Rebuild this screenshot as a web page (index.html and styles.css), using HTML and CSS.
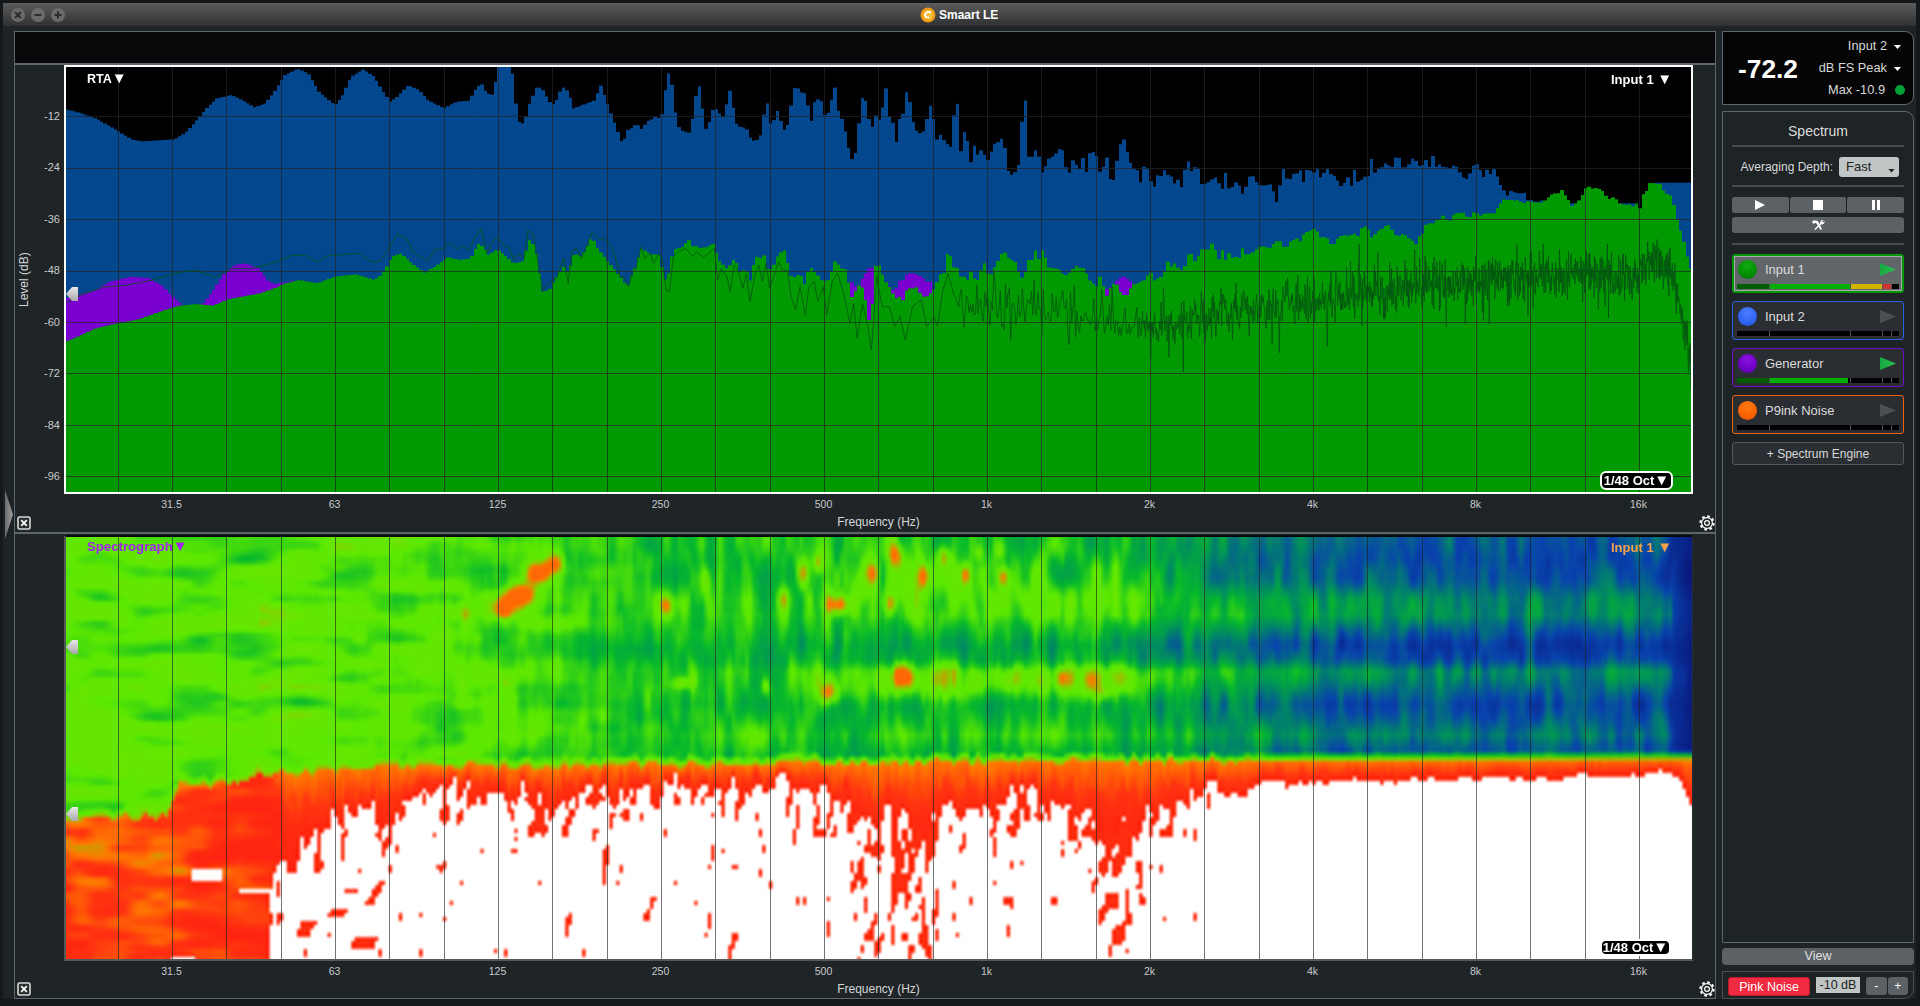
FILE: index.html
```html
<!DOCTYPE html>
<html lang="en">
<head>
<meta charset="utf-8">
<title>Smaart LE</title>
<link rel="stylesheet" href="styles.css">
</head>
<body>
<div class="app">
  <header class="titlebar">
    <div class="winbtns">
      <svg class="winbtn" viewBox="0 0 14 14"><circle cx="7" cy="7" r="7" fill="#6b6b6b"/><path d="M4 4l6 6M10 4l-6 6" stroke="#2c2c2c" stroke-width="2"/></svg>
      <svg class="winbtn" viewBox="0 0 14 14"><circle cx="7" cy="7" r="7" fill="#6b6b6b"/><path d="M3.5 7h7" stroke="#2c2c2c" stroke-width="2"/></svg>
      <svg class="winbtn" viewBox="0 0 14 14"><circle cx="7" cy="7" r="7" fill="#6b6b6b"/><path d="M3.5 7h7M7 3.5v7" stroke="#2c2c2c" stroke-width="2"/></svg>
    </div>
    <div class="apptitle">
      <svg class="applogo" viewBox="0 0 16 16"><circle cx="8" cy="8" r="7.5" fill="#f09a14"/><circle cx="8" cy="8" r="5" fill="#f8c040"/><path d="M11 5.500A4 4 0 0 0 5 8c.4 2 2.400 3 4 2.200" fill="none" stroke="#fff" stroke-width="1.600"/></svg>
      <span>Smaart LE</span>
    </div>
  </header>
  <div class="workspace">
    <main class="main">
      <div class="cmdbar"></div>
      <section class="pane pane-rta">
        <div class="yaxis">
          <div class="ylabel">Level (dB)</div>
          <div class="yticks">
            <span>-12</span><span>-24</span><span>-36</span><span>-48</span><span>-60</span><span>-72</span><span>-84</span><span>-96</span>
          </div>
        </div>
        <div class="plot plot-rta">
          <canvas id="rta" width="1625" height="425"></canvas>
          <div class="tag tag-left tag-rta">RTA<b class="tri">▼</b></div>
          <div class="tag tag-right">Input 1 <b class="tri">▼</b></div>
          <div class="badge">1/48 Oct<b class="tri">▼</b></div>
          <i class="handle handle-a"></i>
        </div>
        <svg class="closebox" viewBox="0 0 14 14"><rect x="1" y="1" width="12" height="12" rx="1.5" fill="#2a2e31" stroke="#d8d8d8" stroke-width="1.6"/><path d="M4.2 4.2l5.6 5.6M9.8 4.2l-5.6 5.6" stroke="#fff" stroke-width="1.7"/></svg>
        <div class="xaxis">
          <div class="xticks"><span>31.5</span><span>63</span><span>125</span><span>250</span><span>500</span><span>1k</span><span>2k</span><span>4k</span><span>8k</span><span>16k</span></div>
          <div class="xlabel">Frequency (Hz)</div>
        </div>
        <svg class="gear" viewBox="0 0 16 16"><circle cx="8" cy="8" r="5.4" fill="none" stroke="#fff" stroke-width="1.2"/><circle cx="8" cy="8" r="6.6" fill="none" stroke="#fff" stroke-width="2.2" stroke-dasharray="2.6 2.58"/><circle cx="8" cy="8" r="2.4" fill="none" stroke="#fff" stroke-width="1.2"/></svg>
      </section>
      <section class="pane pane-spec">
        <div class="specgutter"></div>
        <div class="plot plot-spec">
          <canvas id="spec" width="1626" height="422"></canvas>
          <div class="tag tag-left tag-spec">Spectrograph<b class="tri">▼</b></div>
          <div class="tag tag-right tag-orange">Input 1 <b class="tri">▼</b></div>
          <div class="badge badge-spec">1/48 Oct<b class="tri">▼</b></div>
          <i class="handle handle-b"></i>
          <i class="handle handle-c"></i>
        </div>
        <svg class="closebox" viewBox="0 0 14 14"><rect x="1" y="1" width="12" height="12" rx="1.5" fill="#2a2e31" stroke="#d8d8d8" stroke-width="1.6"/><path d="M4.2 4.2l5.6 5.6M9.8 4.2l-5.6 5.6" stroke="#fff" stroke-width="1.7"/></svg>
        <div class="xaxis">
          <div class="xticks"><span>31.5</span><span>63</span><span>125</span><span>250</span><span>500</span><span>1k</span><span>2k</span><span>4k</span><span>8k</span><span>16k</span></div>
          <div class="xlabel">Frequency (Hz)</div>
        </div>
        <svg class="gear" viewBox="0 0 16 16"><circle cx="8" cy="8" r="5.4" fill="none" stroke="#fff" stroke-width="1.2"/><circle cx="8" cy="8" r="6.6" fill="none" stroke="#fff" stroke-width="2.2" stroke-dasharray="2.6 2.58"/><circle cx="8" cy="8" r="2.4" fill="none" stroke="#fff" stroke-width="1.2"/></svg>
      </section>
      <i class="splitter"></i>
    </main>
    <aside class="side">
      <div class="meterbox">
        <div class="bigval">-72.2</div>
        <div class="meterinfo">
          <div class="minfo">Input 2<b class="caret"></b></div>
          <div class="minfo">dB FS Peak<b class="caret"></b></div>
          <div class="minfo">Max -10.9<b class="okdot"></b></div>
        </div>
      </div>
      <div class="spectrum">
        <div class="ptitle">Spectrum</div>
        <div class="sep"></div>
        <div class="avgrow">
          <span>Averaging Depth:</span>
          <div class="select">Fast<b class="caret caret-dark"></b></div>
        </div>
        <div class="sep"></div>
        <div class="transport">
          <button class="tbtn"><svg viewBox="0 0 12 10" width="12" height="10"><path d="M1 0l10 5-10 5z" fill="#fff"/></svg></button>
          <button class="tbtn"><svg viewBox="0 0 10 10" width="10" height="10"><rect width="10" height="10" fill="#fff"/></svg></button>
          <button class="tbtn"><svg viewBox="0 0 10 10" width="10" height="10"><path d="M1 0h3v10H1zM6 0h3v10H6z" fill="#fff"/></svg></button>
        </div>
        <button class="toolsbtn"><svg viewBox="0 0 14 12" width="14" height="12"><path d="M2 1.500l4 0 1.500 1.500 3.500 7-1.500 1-4-6.500-1.500-.8L2.800 5 1 3.200z" fill="#fff"/><path d="M12.500 1.200a2.500 2.500 0 0 0-3.300 3L3.400 10l1 1 5.800-5.700a2.500 2.500 0 0 0 3.200-3.200L12 3.500 11 2.500z" fill="#fff"/></svg></button>
        <div class="sep sep-tools"></div>
        <div class="engines">
          <div class="engine engine-green selected">
            <div class="erow"><i class="led led-green"></i><span class="ename">Input 1</span><i class="play on"></i></div>
            <div class="ebar"><u class="c1"><i class="f-dark" style="width:100%"></i></u><u class="c2"><i class="f-green" style="width:100%"></i></u><u class="c3"><i class="f-yellow" style="width:100%"></i></u><u class="c4"><i class="f-red" style="width:100%"></i></u><u class="c5"></u></div>
          </div>
          <div class="engine engine-blue">
            <div class="erow"><i class="led led-blue"></i><span class="ename">Input 2</span><i class="play"></i></div>
            <div class="ebar"><u class="c1"></u><u class="c2"></u><u class="c3"></u><u class="c4"></u><u class="c5"></u></div>
          </div>
          <div class="engine engine-purple">
            <div class="erow"><i class="led led-purple"></i><span class="ename">Generator</span><i class="play on"></i></div>
            <div class="ebar"><u class="c1"><i class="f-dark" style="width:100%"></i></u><u class="c2"><i class="f-green" style="width:98%"></i></u><u class="c3"></u><u class="c4"></u><u class="c5"></u></div>
          </div>
          <div class="engine engine-orange">
            <div class="erow"><i class="led led-orange"></i><span class="ename">P9ink Noise</span><i class="play"></i></div>
            <div class="ebar"><u class="c1"></u><u class="c2"></u><u class="c3"></u><u class="c4"></u><u class="c5"></u></div>
          </div>
        </div>
        <button class="addengine">+ Spectrum Engine</button>
      </div>
      <button class="viewbtn">View</button>
      <div class="genbar">
        <button class="pinkbtn">Pink Noise</button>
        <div class="dbfield">-10 dB</div>
        <div class="stepper"><button>-</button><button>+</button></div>
      </div>
    </aside>
  </div>
</div>
<script src="charts.js"></script>
</body>
</html>
```
FILE: styles.css
```css
* { box-sizing: border-box; }
html, body { margin: 0; height: 100%; }
body { background: #14181a; font-family: "Liberation Sans", Arial, sans-serif; color: #d8d8d8; overflow: hidden; }
button { font: inherit; color: inherit; border: 0; padding: 0; margin: 0; }
.app { width: 1920px; height: 1006px; padding: 3px 4px 7px 3px; display: flex; flex-direction: column; }
.titlebar { height: 23px; flex: none; background: linear-gradient(#5c5c5c, #2f3032); display: flex; align-items: center; position: relative; }
.winbtns { display: flex; gap: 6px; padding-left: 8px; }
.winbtn { width: 14px; height: 14px; display: block; }
.apptitle { position: absolute; left: 917px; top: 0; height: 23px; display: flex; align-items: center; gap: 3px; font-size: 12px; font-weight: bold; color: #fff; }
.applogo { width: 16px; height: 16px; }
.workspace { flex: 1; display: flex; gap: 6px; padding: 5px 2px 0 11px; min-height: 0; background: #1e2326; }
.main { width: 1702px; height: 968px; border: 1px solid #5b6670; flex: none; display: flex; flex-direction: column; position: relative; background: #1f2427; }
.cmdbar { height: 33px; flex: none; background: #080808; border-bottom: 2px solid #5b6670; }
.pane { display: grid; grid-template-columns: 49px 1629px 22px; flex: none; }
.pane-rta { height: 467px; grid-template-rows: 429px 38px; }
.pane-spec { height: 466px; padding-top: 1px; border-top: 2px solid #5b6670; grid-template-rows: 426px 37px; }
.yaxis { display: flex; grid-column: 1; grid-row: 1; }
.specgutter { grid-column: 1; grid-row: 1; }
.ylabel { writing-mode: vertical-rl; transform: rotate(180deg); font-size: 12px; text-align: center; width: 18px; margin-left: 2px; color: #d4d6d8; }
.yticks { flex: 1; display: flex; flex-direction: column; padding-top: 25.3px; align-items: flex-end; padding-right: 4px; font-size: 11px; color: #c8cacc; }
.yticks span { flex: none; height: 51.43px; display: flex; align-items: center; }
.plot { position: relative; grid-column: 2; grid-row: 1; }
.plot canvas { display: block; }
.plot-rta { border: 2px solid #fff; background: #000; }
.plot-spec { border-left: 2px solid #555a58; border-bottom: 2px solid #555a58; border-top: 2px solid #0a0a0a; border-right: 1px solid #2a2e31; }
.tag { position: absolute; font-size: 13px; font-weight: bold; color: #fff; line-height: 14px; white-space: nowrap; }
.tag .tri { font-weight: normal; }
.tri { font-size: 15px; line-height: 12px; }
.tag-left { left: 21px; top: 5px; }
.tag-rta { font-size: 12.500px; }
.tag-spec { color: #a224f0; font-size: 13.200px; top: 3px; }
.tag-right { left: 1545px; top: 6px; }
.tag-orange { color: #f5a04a; top: 4px; }
.badge { position: absolute; left: 1534px; top: 404px; width: 73px; height: 19px; border: 2px solid #fff; border-radius: 6px; background: #000; color: #fff; font-size: 13px; font-weight: bold; line-height: 15px; text-align: center; white-space: nowrap; }
.badge .tri { font-weight: normal; }
.badge-spec { left: 1534px; top: 402px; width: 71px; height: 17px; line-height: 13px; }
.handle { position: absolute; left: 0; width: 12px; height: 14px; background: linear-gradient(#e8e8e8, #a8a8a8); clip-path: polygon(0 50%, 50% 0, 100% 0, 100% 100%, 50% 100%); display: block; }
.handle-a { top: 220px; }
.handle-b { top: 103px; }
.handle-c { top: 270px; }
.closebox { grid-column: 1; grid-row: 2; width: 14px; height: 14px; align-self: end; margin: 0 0 2px 2px; display: block; }
.xaxis { grid-column: 2; grid-row: 2; display: flex; flex-direction: column; }
.xticks { display: flex; padding-left: 26px; height: 20px; align-items: center; font-size: 10.500px; color: #c8cacc; }
.xticks span { flex: none; width: 163px; text-align: center; }
.xlabel { text-align: center; font-size: 12px; line-height: 16px; color: #d4d6d8; }
.gear { grid-column: 3; grid-row: 2; width: 16px; height: 16px; align-self: end; margin: 0 0 1px 6px; display: block; }
.splitter { position: absolute; left: -10px; top: 458px; width: 8px; height: 49px; background: linear-gradient(90deg, #6a6a6a, #a0a0a0); clip-path: polygon(0 0, 100% 50%, 0 100%); }
.side { width: 192px; flex: none; height: 968px; display: flex; flex-direction: column; }
.meterbox { height: 74px; flex: none; background: #050505; border: 1px solid #5b6670; border-radius: 0 9px 9px 0; display: flex; align-items: center; padding: 0 12px 0 15px; justify-content: space-between; }
.bigval { font-size: 26.300px; font-weight: bold; color: #fff; padding-top: 2px; }
.meterinfo { display: flex; flex-direction: column; align-items: flex-end; gap: 8px; font-size: 12.800px; color: #d8d8d8; line-height: 14px; margin-top: -1px; }
.minfo { display: flex; align-items: center; }
.caret { display: block; width: 7px; height: 4px; background: #fff; clip-path: polygon(0 0, 100% 0, 50% 100%); margin: 3px 0 0 7px; }
.caret-dark { background: #222; margin: 4px 0 0 0; position: absolute; right: 4px; top: 8px; }
.okdot { display: block; width: 10px; height: 10px; border-radius: 50%; background: #00a038; margin: 0 -4px 0 10px; }
.spectrum { margin-top: 6px; flex: 1; border: 1px solid #5b6670; border-radius: 0 9px 0 0; padding: 0 9px; display: flex; flex-direction: column; min-height: 0; }
.ptitle { height: 33px; padding-top: 4px; text-align: center; font-size: 14px; line-height: 30px; flex: none; color: #dcdcdc; }
.sep { height: 2px; background: #464c50; flex: none; }
.avgrow { height: 38px; display: flex; align-items: center; justify-content: flex-end; gap: 6px; padding: 1px 5px 0 0; font-size: 12px; flex: none; }
.select { position: relative; width: 60px; height: 20px; background: #c0c6c6; border-radius: 3px; color: #222; font-size: 13px; line-height: 20px; padding-left: 7px; }
.transport { display: flex; gap: 1px; margin-top: 10px; height: 16px; flex: none; }
.tbtn { flex: 1; background: #5c6166; border-radius: 2px; display: flex; align-items: center; justify-content: center; }
.toolsbtn { margin-top: 4px; height: 16px; flex: none; background: #5c6166; border-radius: 3px; display: flex; align-items: center; justify-content: center; }
.sep-tools { margin-top: 10px; }
.engines { margin-top: 9px; display: flex; flex-direction: column; gap: 8px; flex: none; }
.engine { height: 39px; border: 1px solid; border-radius: 3px; background: #2a2e33; padding: 0 4px; }
.engine-green { border-color: #009a00; background: #62666a; box-shadow: inset 0 0 0 1px #009a00, inset 0 0 0 2px #a8aaac; }
.engine-blue { border-color: #2b5fe0; }
.engine-purple { border-color: #6a10c8; }
.engine-orange { border-color: #ee6010; }
.erow { height: 29px; display: flex; align-items: center; }
.led { display: block; width: 19px; height: 19px; border-radius: 50%; margin-left: 1px; }
.led-green { background: radial-gradient(circle at 50% 30%, #10ae10, #008a00 65%, #006a00); }
.led-blue { background: radial-gradient(circle at 50% 30%, #4a80ff, #2e62f0 65%, #2450c0); }
.led-purple { background: radial-gradient(circle at 50% 30%, #8a10e0, #6c00c4 65%, #5400a0); }
.led-orange { background: radial-gradient(circle at 50% 30%, #ff7a10, #fa6000 65%, #d04e00); }
.ename { font-size: 13px; margin-left: 8px; flex: 1; color: #dcdcdc; padding-bottom: 1px; }
.play { display: block; width: 16px; height: 13px; background: #4c5054; clip-path: polygon(0 0, 100% 50%, 0 100%); margin-right: 3px; }
.play.on { background: linear-gradient(90deg, #18a840, #28c050); }
.ebar { height: 5px; display: flex; gap: 1px; background: #555; }
.ebar u { display: block; height: 100%; background: #000; text-decoration: none; }
.ebar .c1 { width: 32px; }
.ebar .c2 { width: 80px; }
.ebar .c3 { width: 31px; }
.ebar .c4 { width: 8px; }
.ebar .c5 { width: 7px; }
.ebar u i { display: block; height: 100%; }
.f-dark { background: #005c00; }
.f-green { background: #00ae00; }
.f-yellow { background: #d0b400; }
.f-red { background: #d03434; }
.addengine { margin-top: 8px; height: 23px; flex: none; background: #2a2e33; border: 1px solid #54585c; border-radius: 3px; font-size: 12px; color: #d8d8d8; padding-top: 1px; }
.viewbtn { margin-top: 5px; height: 17px; flex: none; background: #5c6166; border-radius: 4px; font-size: 12.500px; color: #e0e0e0; line-height: 17px; }
.genbar { margin-top: 6px; height: 28px; flex: none; border: 1px solid #464c50; border-radius: 0 0 10px 0; display: flex; align-items: flex-start; padding: 5px 5px 0; }
.pinkbtn { width: 82px; height: 19px; background: #f02a40; border: 1px solid #b81a2c; border-radius: 3px; color: #fff; font-size: 12.500px; }
.dbfield { width: 44px; height: 16px; margin-left: 6px; background: #c0c6c6; color: #222; font-size: 12.500px; line-height: 16px; text-align: center; }
.stepper { margin-left: 6px; width: 42px; height: 18px; display: flex; gap: 1px; }
.stepper button { flex: 1; background: #5c6166; color: #fff; font-size: 12px; border-radius: 3px; }
```
FILE: charts.js
```js
(function () {
  // ---------- helpers ----------
  function rng(seed) {
    return function () {
      seed |= 0; seed = seed + 0x6D2B79F5 | 0;
      var t = Math.imul(seed ^ seed >>> 15, 1 | seed);
      t = t + Math.imul(t ^ t >>> 7, 61 | t) ^ t;
      return ((t ^ t >>> 14) >>> 0) / 4294967296;
    };
  }
  function lerpTable(tbl, x) {
    if (x <= tbl[0][0]) return tbl[0][1];
    for (var i = 1; i < tbl.length; i++) {
      if (x <= tbl[i][0]) {
        var a = tbl[i - 1], b = tbl[i];
        return a[1] + (b[1] - a[1]) * (x - a[0]) / (b[0] - a[0]);
      }
    }
    return tbl[tbl.length - 1][1];
  }
  function hash(ix, iy, s) {
    var h = Math.sin(ix * 127.1 + iy * 311.7 + s * 74.7) * 43758.5453;
    return h - Math.floor(h);
  }
  function vnoise(x, y, sx, sy, s) {
    var fx = x / sx, fy = y / sy, ix = Math.floor(fx), iy = Math.floor(fy);
    var u = fx - ix, v = fy - iy;
    u = u * u * (3 - 2 * u); v = v * v * (3 - 2 * v);
    var a = hash(ix, iy, s), b = hash(ix + 1, iy, s), c = hash(ix, iy + 1, s), d = hash(ix + 1, iy + 1, s);
    return a + (b - a) * u + (c - a) * v + (a - b - c + d) * u * v;
  }
  function pts8(list) { return list.map(function (p) { return [60 + p[0] / 2.8, 60 + p[1] / 3]; }); }
  function stepped(orgX, vals, from) {
    var out = [];
    for (var i = 0; i < vals.length; i++) {
      var x = orgX + (i * 10) / 2.8;
      if (x >= from) out.push([x, 60 + vals[i] / 3]);
    }
    return out;
  }

  // ---------- RTA traces ----------
  var blue = pts8([[18,148],[60,160],[100,175],[150,205],[200,238],[230,244],[320,238],[350,220],[380,185],[410,145],[440,115],[480,105],[510,120],[545,142],[575,130],[600,95],[630,45],[665,26],[695,40],[725,95],[770,135],[790,110],[815,50],[850,28],[880,50],[905,95],[925,125],[945,110],[975,75],[1005,90],[1030,120],[1075,145],[1110,125],[1145,122],[1165,85],[1180,70],[1195,100],[1215,105],[1225,20],[1265,20],[1275,120],[1285,185],[1300,192],[1315,130],[1335,80],[1350,85],[1370,125],[1385,135],[1400,95],[1412,80],[1425,100],[1438,145],[1500,120],[1512,70]])
    .concat(stepped(600, [70,72,108,125,132,175,245,235,205,205,192,198,212,182,182,175,165,188,115,35,55,150,200,212,215,218,172,97,75,168,222,168,138,155,165,175,75,122,188,200,202,205,232,242,240,225,155,125,208,170,145,205,212,180,90,76,100,92,118,195,128,118,122,165,158,115,77,172,178,230,282,308,255,125,100,155,218,160,185,155,75,170,188,248,170,160,82,140,205,215,222,208,148,125,250,218,238,245,278,172,120,275,215,245,315,245,295,262,295,302,255,248,245,225,325,348,335,342,198,105,290,290,270,292,345,312,290,290,275,262,278,365,305,295,350,275,350,280,275,285,335,320,290,368,358,285,240,238,300,315,338,322], 618))
    .concat(stepped(1140, [380,320,320,362,380,345,348,328,348,350,378,350,400,278,328,340,298,372,372,368,360,350,368,388,338,388,380,365,380,408,368,340,355,375,375,378,372,375,438,390,322,355,358,342,340,330,372,320,335,338,320,372,312,340,345,352,378,378,342,388,325,365,360,350,348,290,348,320,322,305,322,320,268,322,322,322,295,298,318,318,298,322,288,322,312,322,322,325,312,325,345,358,355,322,310,318,360,325,345,325,348,375,392,408,390,398,400,400,398,435,408,440,408,440,430,430,430,430,430,430,430,430,430,430,430,430,430,430,430,430,430,430,430,430,430,430,430,430,430,430,458,430,400,395,368], 1140));

  var green = pts8([[18,845],[60,825],[100,805],[160,790],[220,778],[280,755],[330,738],[380,732],[430,737],[470,718],[510,710],[560,700],[600,685],[630,670],[670,660],[720,670],[770,650],[830,643],[880,660],[900,645],[915,620],[930,590],[955,580],[985,610],[1020,638],[1050,620],[1085,592],[1120,600],[1150,595],[1170,550],[1185,560],[1200,585],[1225,567],[1250,590],[1270,610],[1295,605],[1315,540],[1330,560],[1345,650],[1350,695],[1370,690],[1385,660],[1410,620],[1422,640],[1440,580],[1460,590],[1490,530],[1505,565]])
    .concat(stepped(600, [545,535,545,560,590,640,655,670,675,640,620,580,560,580,578,590,575,600,660,655,595,568,565,562,550,540,560,558,565,562,562,555,550,600,605,625,625,600,600,635,630,630,665,615,590,595,585,635,625,610,580,575,568,645,650,655,630,685,640,622,635,645,660,662,660,630,600,618,628,628,690,725,668,685,680,780,780,620,610,640,665,680,700,715,710,722,685,685,685,680,710,710,708,690,685,635,660,582,582,622,622,650,650,660,630,660,660,620,605,660,630,615,590,570,590,600,598,630,655,640,600,600,570,600,566,600,630,622,628,630,650,640,635,615,625,620,635,660,670,680,650,680,710,680,670,675,705,705,705,670,675,665,665,655,628,665,650], 618))
    .concat(stepped(1140, [660,660,660,625,670,655,650,632,600,625,605,632,630,610,560,605,600,570,565,575,548,565,600,570,600,578,595,590,595,555,595,575,578,560,560,558,568,555,545,540,560,562,545,540,535,545,520,515,510,505,520,540,525,545,560,540,530,525,528,525,520,530,505,500,510,535,520,510,505,495,495,520,530,525,520,535,535,560,530,525,495,490,490,480,478,465,480,482,458,460,458,458,482,458,455,470,462,460,460,462,445,430,418,420,420,422,420,428,430,420,430,425,430,425,415,405,400,402,388,405,420,438,430,420,402,380,380,388,382,390,395,420,412,412,430,432,435,432,440,430,445,400,392,365,370,372,372,402,402,410,460,500,530,575,625], 1140));

  var purple = pts8([[18,715],[100,690],[140,665],[200,650],[250,655],[290,680],[320,715],[350,740],[400,732],[430,690],[460,640],[490,615],[520,610],[555,625],[585,665],[600,672],[640,665],[650,662]]);
  var purpleRight = [[690,685],[700,670],[710,665],[720,690],[730,660],[740,650],[750,625],[760,625],[770,620],[780,640],[820,690],[830,685],[840,660],[850,660],[860,640],[870,640],[880,640],[900,650],[920,670],[930,660]].map(function (p) { return [600 + p[0] / 2.8, 60 + p[1] / 3]; });
  var purpleFar = [[1410,655],[1420,690],[1440,670],[1460,650],[1470,650],[1480,660],[1500,675],[1510,665]].map(function (p) { return [600 + p[0] / 2.8, 60 + p[1] / 3]; });

  var lineHead = pts8([[18,728],[60,705],[120,682],[190,675],[260,660],[320,640],[380,630],[435,652],[480,625],[540,625],[610,605],[650,585],[690,587],[720,607],[750,587],[840,580],[870,605],[895,605],[920,565],[945,522],[970,535],[990,578],[1030,603],[1050,568],[1070,568],[1090,547],[1110,568],[1130,558],[1145,572],[1165,525],[1180,508],[1195,580],[1210,545],[1225,532],[1245,558],[1258,562],[1270,600],[1285,582],[1300,595],[1310,512],[1325,522],[1340,620],[1352,692],[1365,670],[1390,655],[1410,595],[1423,670],[1435,570],[1447,565],[1460,595],[1490,518]])
    .concat([[0,540],[10,535],[30,555],[45,600],[55,650],[65,650],[80,680],[90,640],[100,625],[115,562],[125,595],[140,580],[150,610],[165,580],[175,600],[185,690],[195,695],[205,590],[220,575],[240,565],[260,590],[270,575],[290,592],[320,565],[330,660],[340,625],[355,650],[365,695],[375,615],[385,625],[400,685],[410,640],[420,725],[435,640],[445,615],[455,665],[465,610],[475,685],[490,640],[500,605],[510,630],[525,630],[535,710],[548,750],[560,680],[575,765],[585,680],[600,665],[610,725],[625,680],[635,765],[650,665],[665,640],[680,690],[700,790],[710,730],[720,835],[735,730],[750,800],[760,870],[775,650],[790,740],[810,740],[825,800],[840,770],[855,840],[875,740],[900,720],[915,800],[935,770],[945,800],[960,690],[975,640],[990,700],[1005,740]].map(function (p) { return [600 + p[0] / 2.8, 60 + p[1] / 3]; }));

  var lineMean = [[960,302],[1030,304],[1100,320],[1160,324],[1175,324],[1211,314],[1283,304],[1426,284],[1497,278],[1569,274],[1640,276],[1658,257],[1672,277],[1679,303],[1687,340],[1691,370]];

  function drawRTA() {
    var c = document.getElementById('rta');
    var g = c.getContext('2d');
    var ox = 66, oy = 67, W = c.width, H = c.height, bin = 163 / 48;
    g.fillStyle = '#000'; g.fillRect(0, 0, W, H);
    var n = Math.ceil(W / bin);
    function bars(fn, col) {
      g.fillStyle = col;
      for (var i = 0; i < n; i++) {
        var x = ox + (i + 0.5) * bin, y = fn(x);
        if (y === null) continue;
        var px = Math.round(i * bin), qx = Math.round((i + 1) * bin);
        g.fillRect(px, y - oy, qx - px, H - (y - oy));
      }
    }
    bars(function (x) { return x > 1690 ? 60 + 368 / 3 : lerpTable(blue, x); }, '#03478e');
    bars(function (x) {
      var gy = lerpTable(green, x);
      if (x < purple[purple.length - 1][0]) return lerpTable(purple, x);
      if (x >= purpleRight[0][0] && x <= purpleRight[purpleRight.length - 1][0]) return Math.min(gy, lerpTable(purpleRight, x));
      if (x >= purpleFar[0][0] && x <= purpleFar[purpleFar.length - 1][0]) return Math.min(gy, lerpTable(purpleFar, x));
      return null;
    }, '#7a00d2');
    bars(function (x) { return lerpTable(green, x); }, '#009a00');

    // grid
    g.strokeStyle = 'rgba(36,36,40,.72)'; g.lineWidth = 1;
    g.beginPath();
    for (var k = 0; k < 30; k++) {
      var vx = Math.round(117.7 + 54.33 * k - ox) + 0.5;
      if (vx < W) { g.moveTo(vx, 0); g.lineTo(vx, H); }
    }
    for (var j = 0; j < 8; j++) {
      var hy = Math.round(116.3 + 51.43 * j - oy) + 0.5;
      g.moveTo(0, hy); g.lineTo(W, hy);
    }
    g.stroke();

    // thin trace
    var r = rng(4711);
    g.strokeStyle = 'rgba(4,84,18,.8)'; g.lineWidth = 1;
    g.beginPath();
    lineHead.forEach(function (p, i) {
      if (i === 0) g.moveTo(p[0] - ox, p[1] - oy); else g.lineTo(p[0] - ox, p[1] - oy);
    });
    var x = 960;
    while (x < 1691) {
      var step = x < 1140 ? 1.3 : (x < 1350 ? 0.6 : 0.38);
      var amp = 34;
      var u = (r() + r() + r()) / 1.5 - 1;
      var y = lerpTable(lineMean, x) + u * amp + (r() > 0.9 ? (r() - 0.45) * 70 : 0);
      g.lineTo(x - ox, y - oy);
      x += step;
    }
    g.stroke();
  }

  // ---------- spectrograph ----------
  var ridgeT = [[66,818],[165,818],[180,785],[238,783],[250,775],[337,770],[400,767],[880,763],[1100,762],[1300,760],[1692,759]];
  var whiteT = [[270,900],[278,870],[311,847],[337,815],[395,817],[416,793],[437,787],[457,797],[494,793],[557,803],[609,793],[661,790],[766,790],[845,797],[880,823],[932,823],[985,813],[1037,797],[1089,830],[1141,823],[1194,793],[1246,787],[1298,783],[1351,783],[1471,780],[1560,778],[1664,773],[1680,778],[1692,807]];
  var baseT = [[66,.585],[170,.58],[300,.58],[500,.55],[650,.48],[880,.47],[1100,.455],[1250,.36],[1350,.28],[1500,.26],[1660,.26],[1676,.11],[1692,.04]];
  var bandT = [[537,-.2],[560,-.4],[580,-.3],[600,.4],[615,.5],[630,-.1],[645,-.7],[660,-.4],[672,.5],[680,.3],[695,-.2],[705,-.5],[720,-.2],[735,.25],[745,-.1],[755,-.4],[765,-.2]];
  var blobs = [[504,609,14,9,.3],[520,594,13,11,.34],[539,573,13,13,.36],[555,562,9,10,.28],[667,606,8,11,.24],[706,580,6,14,.24],[784,600,6,12,.22],[803,573,6,14,.26],[818,563,6,10,.22],[839,605,12,9,.3],[873,573,6,11,.22],[682,683,10,6,.2],[829,693,9,12,.28],[766,687,5,9,.18],[507,685,6,9,.14],[465,617,6,16,.12],[463,683,5,14,.08],[896,555,7,14,.28],[943,557,7,11,.24],[924,577,5,11,.22],[966,575,5,10,.22],[1003,577,6,10,.26],[890,605,5,9,.2],[901,675,7,9,.28],[1105,693,6,7,.14],[1063,677,4,7,.1],[979,553,4,7,.14],[1000,550,4,7,.12]];
  var whitePatches = [[190,222,869,880],[238,280,888,895],[276,327,865,872],[172,196,955,961],[261,269,843,847]];
  // red slashes inside the white field: [x0, x1, y0, y1], sheared so they lean like the reference's
  var redPatches = [[345,357,889,895],[372,380,880,905],[298,312,922,938],[330,346,909,916],[352,376,938,950]];
  var ramp = [[0,[10,20,120]],[.18,[8,66,172]],[.33,[0,140,96]],[.45,[6,184,44]],[.56,[92,232,0]],[.64,[104,230,0]],[.7,[180,170,0]],[.76,[255,122,0]],[.88,[255,52,16]],[1,[255,34,16]]];

  function colour(v) {
    if (v >= 1.02) return [255, 255, 255];
    if (v <= 0) return ramp[0][1];
    for (var i = 1; i < ramp.length; i++) {
      if (v <= ramp[i][0]) {
        var a = ramp[i - 1], b = ramp[i], t = (v - a[0]) / (b[0] - a[0]);
        return [a[1][0] + (b[1][0] - a[1][0]) * t, a[1][1] + (b[1][1] - a[1][1]) * t, a[1][2] + (b[1][2] - a[1][2]) * t];
      }
    }
    return ramp[ramp.length - 1][1];
  }
  function inBox(list, x, y, shear) {
    for (var p = 0; p < list.length; p++) {
      var P = list[p], sx = x + (y - (P[2] + P[3]) / 2) * shear;
      if (sx > P[0] && sx < P[1] && y > P[2] && y < P[3]) return true;
    }
    return false;
  }

  function field(x, y) {
    var ridge = lerpTable(ridgeT, x);
    if (x < 1250) ridge += 8 * (vnoise(x, 0, 6, 1, 9) - 0.5);
    var hf = Math.max(0, Math.min(1, (x - 260) / 500));
    var left = vnoise(x, y, 50, 13, 1) - 0.5;
    var left2 = vnoise(x, y, 20, 8, 2) - 0.5;
    var right = vnoise(x, y, 9, 32, 3) - 0.5;
    var right2 = vnoise(x, y, 4.5, 20, 4) - 0.5;
    var n = (1 - hf) * (left * 0.2 + left2 * 0.08) + hf * (right * 0.16 + right2 * 0.07);
    if (y < ridge) {
      var edgeFade = x > 1672 ? 0.3 : 1;
      var amp = 0.03 + 0.125 * Math.max(0, Math.min(1, (x - 500) / 800));
      var v = lerpTable(baseT, x) + edgeFade * (amp * lerpTable(bandT, y) + n);
      if (x < 260) v = Math.min(v, 0.62);
      if (x > 780 && x < 1200) {
        var fade = x < 880 ? (x - 780) / 100 : (x < 1100 ? 1 : (1200 - x) / 100);
        var r1 = (y - 578) / 32, r2 = (y - 683) / 17;
        v += 0.1 * fade * Math.exp(-r1 * r1) * (0.5 + vnoise(x, y, 14, 30, 7));
        v += 0.13 * fade * Math.exp(-r2 * r2) * (0.5 + vnoise(x, y, 14, 20, 8));
      }
      var hot = 0;
      for (var b = 0; b < blobs.length; b++) {
        var B = blobs[b], dx = (x - B[0]) / B[2], dy = (y - B[1]) / B[3];
        var q = dx * dx + dy * dy;
        if (q < 6) hot += B[4] * Math.exp(-q);
      }
      v = Math.min(0.79, v + hot);
      var near = (y - (ridge - 9)) / 9;
      if (near > 0) v += (0.7 - v) * near;
      return v;
    }
    var wt = x < 270 ? 99999 : lerpTable(whiteT, x);
    var jit = x < 1150 ? 16 : (x < 1300 ? 16 - 13 * (x - 1150) / 150 : 3);
    wt += (vnoise(x, 0, 4.5, 1, 11) - 0.5) * 2 * jit + (vnoise(x, 0, 14, 1, 12) - 0.5) * jit;
    if (y < wt) {
      if (x < 285) {
        if (inBox(whitePatches, x, y, 0)) return 1.2;
        return Math.min(0.98, 0.815 + 0.05 * Math.min(1, (y - ridge) / 60) + left * 0.2 + left2 * 0.15 + 0.07 * Math.max(0, Math.min(1, (x - 170) / 90)));
      }
      var span = Math.max(14, Math.min(wt - ridge, 60));
      var t = Math.min(1, (y - ridge) / span);
      return Math.min(0.76 + 0.2 * t + (vnoise(x, y, 4, 14, 13) - 0.5) * 0.05, 1);
    }
    if (inBox(redPatches, x, y, 0.55)) return 0.92;
    var dense = 0;
    if (x > 850 && x < 880) dense = 0.55;
    if (x > 892 && x < 938) dense = 0.9;
    if (x > 1094 && x < 1132) dense = 1;
    var thr = x > 1210 ? 2 : 0.89 - dense * 0.33;
    if (y < wt + 34 && x < 1210) thr -= 0.19;
    var s = vnoise(x + y * 0.12, y, 5, 17, 21);
    if (s > thr) return 0.92;
    return 1.2;
  }

  function drawSpec() {
    var c = document.getElementById('spec');
    var g = c.getContext('2d');
    var ox = 66, oy = 537, W = c.width, H = c.height;
    var cw = 163 / 48, ch = 4;
    var cols = Math.ceil(W / cw), rows = Math.ceil(H / ch);
    var off = document.createElement('canvas');
    off.width = cols; off.height = rows;
    var og = off.getContext('2d');
    var im = og.createImageData(cols, rows);
    for (var j = 0; j < rows; j++) {
      for (var i = 0; i < cols; i++) {
        var col = colour(field(ox + (i + 0.5) * cw, oy + (j + 0.5) * ch));
        var k = (j * cols + i) * 4;
        im.data[k] = col[0]; im.data[k + 1] = col[1]; im.data[k + 2] = col[2]; im.data[k + 3] = 255;
      }
    }
    og.putImageData(im, 0, 0);
    g.imageSmoothingEnabled = true;
    g.imageSmoothingQuality = 'high';
    g.drawImage(off, 0, 0, cols * cw, rows * ch);
    g.strokeStyle = 'rgba(28,32,34,.62)'; g.lineWidth = 1;
    g.beginPath();
    for (var m = 0; m < 30; m++) {
      var vx = Math.round(117.7 + 54.33 * m - ox) + 0.5;
      if (vx < W) { g.moveTo(vx, 0); g.lineTo(vx, H); }
    }
    g.stroke();
  }

  drawRTA();
  drawSpec();
})();
```
